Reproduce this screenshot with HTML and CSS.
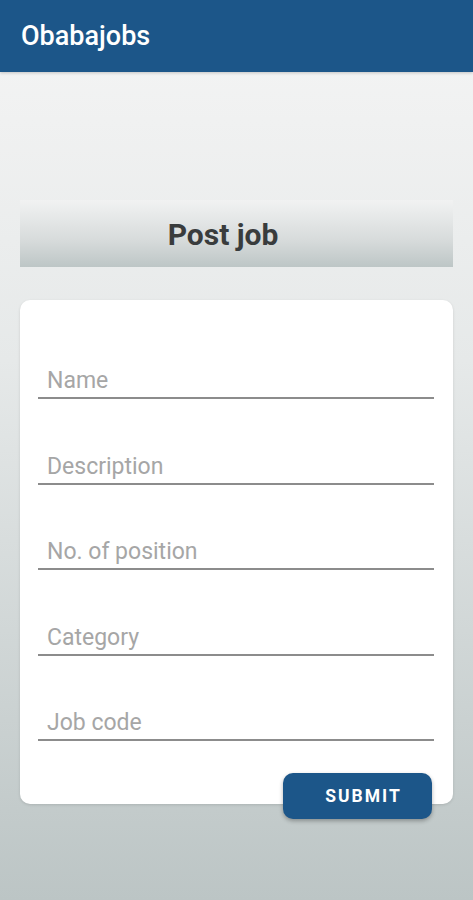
FILE: index.html
```html
<!DOCTYPE html>
<html lang="en">
<head>
    <meta charset="UTF-8">
    <meta name="viewport" content="width=device-width, initial-scale=1.0">
    <title>Obabajobs</title>
    <link rel="stylesheet" href="styles.css">
</head>
<body>
    <header class="app-bar">
        <h1>Obabajobs</h1>
    </header>
    <main class="content">
        <div class="title-bar">
            <h2>Post job</h2>
        </div>
        <div class="card">
            <div class="field"><input type="text" placeholder="Name"></div>
            <div class="field"><input type="text" placeholder="Description"></div>
            <div class="field"><input type="text" placeholder="No. of position"></div>
            <div class="field"><input type="text" placeholder="Category"></div>
            <div class="field"><input type="text" placeholder="Job code"></div>
            <div class="actions">
                <button type="button">SUBMIT</button>
            </div>
        </div>
    </main>
</body>
</html>
```
FILE: styles.css
```css
html, body {
    margin: 0;
    padding: 0;
}
body {
    font-family: Roboto, 'Noto Sans', sans-serif;
    min-height: 900px;
    background: linear-gradient(180deg, #f5f5f5 0%, #e6e9e9 40%, #bcc5c5 100%);
}
.app-bar {
    height: 72px;
    background-color: #1c5689;
    display: flex;
    align-items: center;
    padding: 0 21px;
    box-shadow: 0 1px 3px rgba(0, 0, 0, 0.2);
}
.app-bar h1 {
    margin: 0;
    color: #ffffff;
    font-size: 27px;
    font-weight: 500;
    margin-top: -1px;
}
.content {
    padding: 128px 20px 0;
}
.title-bar {
    height: 67px;
    display: flex;
    align-items: center;
    justify-content: center;
    background: linear-gradient(180deg, #f1f2f2 0%, #d7dbdb 60%, #bdc6c6 100%);
}
.title-bar h2 {
    margin: 2px 27px 0 0;
    font-size: 30px;
    font-weight: 700;
    color: #393c3d;
}
.card {
    display: flow-root;
    margin-top: 33px;
    background-color: #ffffff;
    border-radius: 10px;
    padding: 13.5px 19px 0 18px;
    box-shadow: 0 1px 3px rgba(0, 0, 0, 0.12);
}
.field {
    margin-top: 44.5px;
}
.field input {
    display: block;
    width: 100%;
    box-sizing: border-box;
    height: 41px;
    border: none;
    border-bottom: 2px solid #8c8c8c;
    padding: 6px 0 0 9px;
    font-family: Roboto, 'Noto Sans', sans-serif;
    font-size: 23px;
    color: #333333;
    background: transparent;
    outline: none;
}
.field input::placeholder {
    color: #a6a6a6;
}
.actions {
    display: flex;
    justify-content: flex-end;
    margin-top: 31.5px;
    margin-bottom: -15px;
    padding-right: 2px;
}
.actions button {
    width: 149px;
    height: 46px;
    padding: 0 0 0 12px;
    border: none;
    border-radius: 10px;
    background-color: #1c5689;
    color: #ffffff;
    font-family: Roboto, 'Noto Sans', sans-serif;
    font-size: 17.5px;
    font-weight: 700;
    letter-spacing: 2px;
    box-shadow: 0 2px 4px rgba(0, 0, 0, 0.3);
    cursor: pointer;
}
```
